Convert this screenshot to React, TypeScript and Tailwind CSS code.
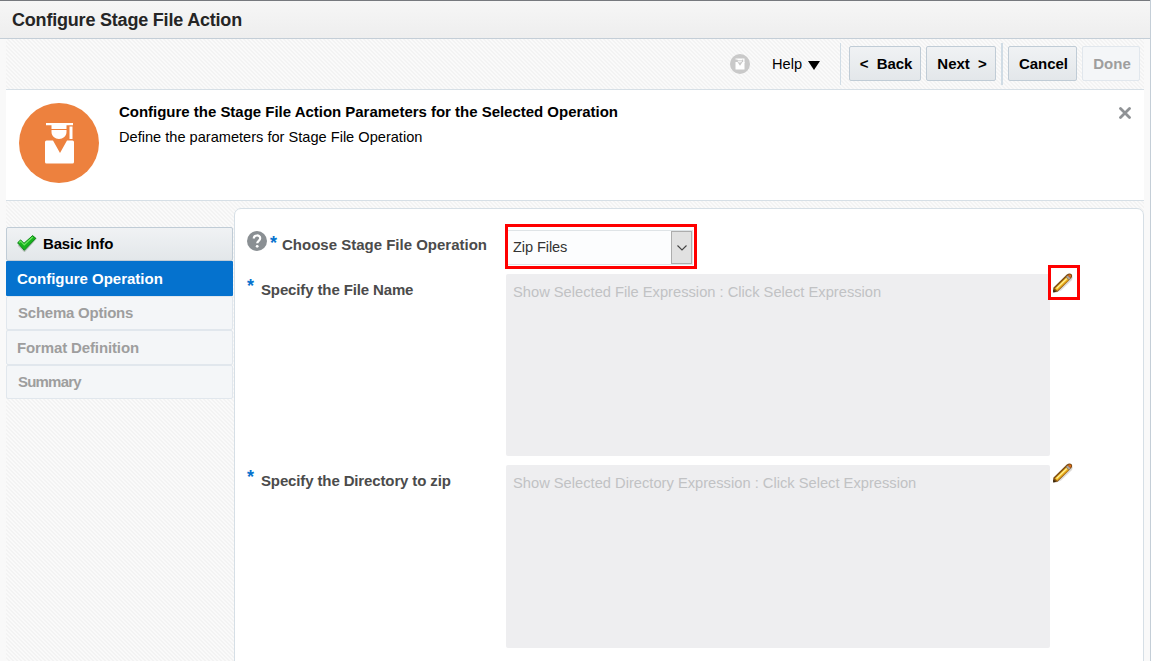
import React from 'react';

const stripes =
  'bg-[linear-gradient(45deg,#f3f3f3_25%,#fafafa_25%,#fafafa_50%,#f3f3f3_50%,#f3f3f3_75%,#fafafa_75%)] bg-[length:4px_4px]';

function Graduate({ className }: { className: string }) {
  return (
    <svg viewBox="0 0 80 80" className={className}>
      <circle cx="40" cy="40" r="40" fill="currentColor" />
      <g fill="#fff">
        <path d="M27 20h27v2.2H47.500V26h-15v-3.800H27z" />
        <path d="M50.500 23.500h3V36h-3z" />
        <path d="M32.500 27h15v2c0 4-3.500 7-7.500 7s-7.500-3-7.500-7z" />
        <path d="M27.500 37.500h6.500L41 50l7-12.500h5.500a1.500 1.500 0 0 1 1.500 1.500v20a1.500 1.500 0 0 1-1.500 1.500h-26A1.500 1.500 0 0 1 26 59V39a1.500 1.500 0 0 1 1.500-1.500z" />
      </g>
    </svg>
  );
}

function GraduateBadge() {
  return (
    <svg viewBox="0 0 20 20" className="size-5">
      <circle cx="10" cy="10" r="10" fill="#c9c9c9" />
      <g fill="#fff">
        <path d="M5.500 4.500h9V9h-1.300V5.600h-1V6H7.500v-.5h-2z" />
        <path d="M7.700 6.500h4.300c0 3-4.300 3-4.300 0z" opacity=".75" />
        <path d="M5.500 8h2L10 11.800 12.500 8h2v7.500h-9z" />
      </g>
    </svg>
  );
}

function Pencil() {
  return (
    <svg viewBox="0 0 20 20" className="block size-5">
      <path d="M2 20L8 17.500 19 7l1-3.500-5 4z" fill="#b9b4ad" opacity=".5" />
      <path d="M0.300 19.200V14.800L13.800 1.500C15.500 0 17.700.1 18.600 1.300c1 1.200.7 2.700-.4 3.900L4.500 18.700z" fill="#7b4c12" />
      <path d="M1.500 15.500L13 4.200l3 3L4.300 18z" fill="#d6951a" />
      <path d="M2.300 15.400L13.200 4.700l1.600 1.600L4 16.900z" fill="#f7c92c" />
      <path d="M3.200 15L13.300 5.200l.8.700L4 15.700z" fill="#fff0a0" />
      <path d="M13 4l1.700-1.600 3 2.900-1.700 1.600z" fill="#aaa59e" />
      <path d="M14.900 2.200c1.100-1 2.400-1 3-.3s.3 1.900-.7 2.800z" fill="#e06a18" />
      <path d="M0.200 19.400v-3.200L3 19z" fill="#35240c" />
    </svg>
  );
}

function Check() {
  return (
    <svg viewBox="0 0 20 17" className="block h-[17px] w-5">
      <path d="M1.500 10L7.500 16 19 3" fill="none" stroke="#9aa39a" strokeWidth="2" opacity=".6" />
      <path d="M0.600 7.800L3.600 4.900 7 8.300 15.600.6 18.800 3.300 7.300 15.300z" fill="#17b31c" stroke="#0d8517" strokeWidth="1" strokeLinejoin="round" />
      <path d="M2.100 7.500l1.500-1.300L7.200 9.800 15.700 2" fill="none" stroke="#6be35f" strokeWidth="1.200" />
    </svg>
  );
}

const button =
  'flex h-[35px] items-center justify-center whitespace-pre rounded-[2px] border border-[#c0ccd6] bg-linear-to-b from-[#f0f2f4] to-[#e3e7ea] pl-[2px] pt-[2px] text-[15px] font-bold tracking-[-0.05px] text-black';

function Star({ className }: { className: string }) {
  return <span className={`text-[18px] font-bold leading-none text-[#0572ce] ${className}`}>*</span>;
}

function Field({ label, placeholder, framed, height }: { label: string; placeholder: string; framed?: boolean; height: string }) {
  return (
    <div className={`flex ${height}`}>
      <div className="flex w-[271px] pl-3">
        <Star className="mt-[3px] w-[14px]" />
        <span className="pt-[4px] text-[15px] font-bold leading-6 tracking-[-0.13px] text-[#4b4b4b]">{label}</span>
      </div>
      <div className="w-[544px] rounded-[2px] bg-[#eeeef0] px-[7px] pt-[6px] text-[14.7px] leading-6 text-[#c1c2c4]">{placeholder}</div>
      <div
        className={
          framed
            ? '-ml-[2px] -mt-[9px] h-[35px] w-8 border-[3px] border-[#f00] bg-white pl-[2px] pt-[5px]'
            : '-mt-[2px] ml-[3px] w-5'
        }
      >
        <Pencil />
      </div>
    </div>
  );
}

const disabledTab =
  'flex items-center rounded-[2px] border border-[#e1e7ed] bg-[#f4f6f8] text-[#9e9e9e]';

export default function App() {
  return (
    <div className="flex h-[661px] w-[1151px] flex-col overflow-hidden border-r border-[#c4ced7] bg-[#f9f9f9] font-['Liberation_Sans',Arial,sans-serif] text-black">
      <header className="flex h-[39px] shrink-0 items-center border-b border-t border-b-[#c4ced7] border-t-[#76797e] bg-linear-to-b from-[#f6f6f6] to-[#eeeeee] pl-3 pt-[2px] text-[18px] font-bold tracking-[-0.2px] text-[#252525]">
        Configure Stage File Action
      </header>
      <main className={`mx-[6px] flex min-h-0 flex-1 flex-col ${stripes}`}>
        <div className="flex h-[51px] shrink-0 border-b border-[#d6dfe6] pr-1">
          <div className="ml-auto flex w-[111px] items-center">
            <div className="ml-px">
              <GraduateBadge />
            </div>
            <span className="ml-[22px] pt-[2px] text-[14.6px]">Help</span>
            <svg viewBox="0 0 12 9" className="ml-[6px] mt-[3px] h-[9px] w-3">
              <path d="M0 0h12L6 9z" />
            </svg>
          </div>
          <div className="mt-1 h-[42px] w-px bg-[#d0dce5]" />
          <div className="flex gap-[5px] pl-2 pt-[7px]">
            <button className={`${button} w-[72px]`}>{'<  Back'}</button>
            <button className={`${button} w-[70px]`}>{'Next  >'}</button>
          </div>
          <div className="ml-[5px] mt-1 h-[42px] w-[2px] bg-[#d0dce5]" />
          <div className="flex gap-[5px] pl-[5px] pt-[7px]">
            <button className={`${button} w-[69px]`}>Cancel</button>
            <button className="h-[35px] w-[58px] rounded-[2px] border border-[#e1e7ed] bg-[#f4f6f8] pl-[2px] pt-[2px] text-[15px] font-bold text-[#9e9e9e]">Done</button>
          </div>
        </div>

        <section className="flex h-[111px] shrink-0 border-b border-[#d6dfe6] bg-white pl-[13px] pt-[13px]">
          <Graduate className="size-20 text-[#ed813e]" />
          <div className="ml-5 -mt-[3px] flex-1">
            <h1 className="text-[15px] font-bold leading-6 tracking-[-0.02px]">Configure the Stage File Action Parameters for the Selected Operation</h1>
            <p className="text-[14.6px] leading-[26px]">Define the parameters for Stage File Operation</p>
          </div>
          <svg viewBox="0 0 12 12" className="mr-[13px] mt-1 size-3">
            <path d="M1.500 1.500l9 9m0-9l-9 9" fill="none" stroke="#8f9295" strokeWidth="2.800" strokeLinecap="round" />
          </svg>
        </section>

        <div className="flex min-h-0 flex-1 pt-[7px]">
          <nav className="mt-[19px] w-[227px] text-[15px] font-bold">
            <div className="flex h-[34px] items-center rounded-[2px] border border-[#c0ccd6] bg-linear-to-b from-[#f0f2f4] to-[#e3e7ea] pl-[10px]">
              <div className="-mt-[2px]">
                <Check />
              </div>
              <span className="ml-[6px] tracking-[-0.15px]">Basic Info</span>
            </div>
            <div className="flex h-[35px] items-center rounded-[1px] bg-[#0572ce] pl-[11px] pt-[2px] text-white">Configure Operation</div>
            <div className={`${disabledTab} h-[34px] pl-[11px] tracking-[-0.23px]`}>Schema Options</div>
            <div className={`${disabledTab} h-[35px] pl-[10px] pt-[2px] tracking-[-0.13px]`}>Format Definition</div>
            <div className={`${disabledTab} h-[34px] pl-[11px] tracking-[-0.8px]`}>Summary</div>
          </nav>
          <section className="ml-px h-[460px] w-[910px] rounded-[7px] border border-[#d6dfe6] bg-white">
            <div className="flex h-[65px]">
              <div className="flex w-[270px] pl-3 pt-[22px]">
                <svg viewBox="0 0 20 20" className="size-5">
                  <circle cx="10" cy="10" r="10" fill="#8a8f93" />
                  <path d="M6.800 7.500C6.800 3.500 13.200 3.500 13.200 7.300c0 2.400-3 2.600-3 5" fill="none" stroke="#fff" strokeWidth="2.200" />
                  <circle cx="10.200" cy="15.300" r="1.400" fill="#fff" />
                </svg>
                <Star className="ml-[3px] mt-[3px] w-3" />
                <span className="mt-[2px] text-[15px] font-bold leading-6 text-[#4b4b4b]">Choose Stage File Operation</span>
              </div>
              <div className="mt-[15px] h-[45px] w-[192px] border-[3px] border-[#f00] bg-white pr-px pt-[3px]">
                <div className="flex h-[35px] w-[185px] border-y border-r border-[#dfe4e7] bg-[#fcfdfe] pl-[5px]">
                  <span className="flex-1 text-[14.6px] leading-8 tracking-[-0.1px] text-[#333]">Zip Files</span>
                  <span className="flex w-[21px] items-center justify-center border border-[#adadad] bg-[#e1e1e1]">
                    <svg viewBox="0 0 10 6" className="h-[6px] w-[10px]">
                      <path d="M.5.5L5 5 9.500.5" fill="none" stroke="#444" strokeWidth="1.100" />
                    </svg>
                  </span>
                </div>
              </div>
            </div>
            <Field label="Specify the File Name" placeholder="Show Selected File Expression : Click Select Expression" framed height="h-[182px]" />
            <div className="h-[9px]" />
            <Field label="Specify the Directory to zip" placeholder="Show Selected Directory Expression : Click Select Expression" height="h-[183px]" />
          </section>
        </div>
      </main>
    </div>
  );
}
